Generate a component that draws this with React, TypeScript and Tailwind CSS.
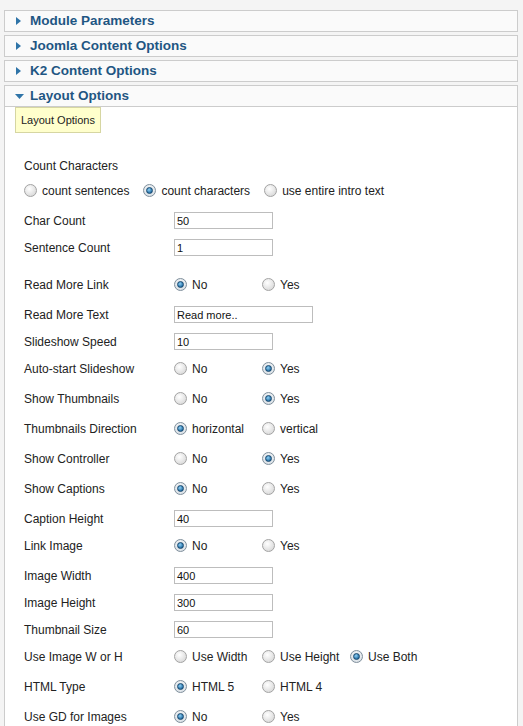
import React from "react";

type Row =
  | { label: string; kind: "input"; value: string; w: number }
  | { label: string; kind: "radio"; options: string[]; sel: number }
  | { kind: "spacer" };

const rows: Row[] = [
  { label: "Char Count", kind: "input", value: "50", w: 99 },
  { label: "Sentence Count", kind: "input", value: "1", w: 99 },
  { kind: "spacer" },
  { label: "Read More Link", kind: "radio", options: ["No", "Yes"], sel: 0 },
  { label: "Read More Text", kind: "input", value: "Read more..", w: 139 },
  { label: "Slideshow Speed", kind: "input", value: "10", w: 99 },
  { label: "Auto-start Slideshow", kind: "radio", options: ["No", "Yes"], sel: 1 },
  { label: "Show Thumbnails", kind: "radio", options: ["No", "Yes"], sel: 1 },
  { label: "Thumbnails Direction", kind: "radio", options: ["horizontal", "vertical"], sel: 0 },
  { label: "Show Controller", kind: "radio", options: ["No", "Yes"], sel: 1 },
  { label: "Show Captions", kind: "radio", options: ["No", "Yes"], sel: 0 },
  { label: "Caption Height", kind: "input", value: "40", w: 99 },
  { label: "Link Image", kind: "radio", options: ["No", "Yes"], sel: 0 },
  { label: "Image Width", kind: "input", value: "400", w: 99 },
  { label: "Image Height", kind: "input", value: "300", w: 99 },
  { label: "Thumbnail Size", kind: "input", value: "60", w: 99 },
  { label: "Use Image W or H", kind: "radio", options: ["Use Width", "Use Height", "Use Both"], sel: 2 },
  { label: "HTML Type", kind: "radio", options: ["HTML 5", "HTML 4"], sel: 0 },
  { label: "Use GD for Images", kind: "radio", options: ["No", "Yes"], sel: 0 },
];

function Radio({ checked }: { checked: boolean }) {
  if (checked) {
    return (
      <span className="flex h-[13px] w-[13px] shrink-0 items-center justify-center rounded-full border border-[#7f8f9c] bg-[radial-gradient(circle_at_50%_40%,#ffffff,#cdd6dd)]">
        <span className="h-[7px] w-[7px] rounded-full border border-[#16476e] bg-[radial-gradient(circle_at_40%_35%,#8fd0f5,#1f6aa0_75%)]" />
      </span>
    );
  }
  return (
    <span className="h-[13px] w-[13px] shrink-0 rounded-full border border-[#a3a3a3] bg-[radial-gradient(circle_at_40%_35%,#ffffff,#d0d0d0)]" />
  );
}

function Collapsed({ title }: { title: string }) {
  return (
    <div className="mb-[3px] flex h-[22px] items-center border border-[#cccccc] bg-[#fafafa]">
      <div className="w-[25px] pl-[11px]">
        <svg width="5" height="8" viewBox="0 0 5 8" className="block">
          <polygon points="0,0 5,4 0,8" fill="#2f74a8" />
        </svg>
      </div>
      <span className="text-[13.5px] font-bold text-[#1f5683]">{title}</span>
    </div>
  );
}

export default function App() {
  return (
    <div className="h-[726px] overflow-hidden bg-[#f4f4f4] pt-[10px] font-['Liberation_Sans',Arial,sans-serif] text-[#222222]">
      <div className="ml-[4px] w-[514px]">
        <Collapsed title="Module Parameters" />
        <Collapsed title="Joomla Content Options" />
        <Collapsed title="K2 Content Options" />
        <div className="flex h-[22px] items-center border border-[#cccccc] bg-[#fafafa]">
          <div className="w-[25px] pl-[10px]">
            <svg width="9" height="5" viewBox="0 0 9 5" className="block">
              <polygon points="0,0 9,0 4.5,5" fill="#2f74a8" />
            </svg>
          </div>
          <span className="text-[13.5px] font-bold text-[#1f5683]">Layout Options</span>
        </div>
        <div className="h-[700px] border-x border-[#cccccc] bg-white">
          <div className="ml-[10px] inline-flex h-[26px] items-center border border-[#d6d6a2] bg-[#ffffcc] px-[5px] text-[11px] text-[#222222]">
            Layout Options
          </div>
          <div className="pl-[19px] pt-[25px] text-[12px]">
            <div className="h-[24px] leading-[17px]">Count Characters</div>
            <div className="mb-[13px] flex h-[17px] items-center">
              {["count sentences", "count characters", "use entire intro text"].map((o, i) => (
                <div key={o} className="mr-[14px] flex items-center">
                  <Radio checked={i === 1} />
                  <span className="ml-[5px]">{o}</span>
                </div>
              ))}
            </div>
            {rows.map((r, idx) => {
              if (r.kind === "spacer") return <div key={idx} className="h-[10px]" />;
              return (
                <div
                  key={idx}
                  className={`flex h-[17px] items-center ${r.kind === "input" ? "mb-[10px]" : "mb-[13px]"}`}
                >
                  <div className="w-[150px] shrink-0">{r.label}</div>
                  {r.kind === "input" ? (
                    <div
                      className="flex h-[17px] items-center border border-[#bdbdbd] bg-white px-[2px] text-[11px] text-[#111111]"
                      style={{ width: r.w }}
                    >
                      {r.value}
                    </div>
                  ) : (
                    <div className="flex items-center">
                      {r.options.map((o, i) => (
                        <div key={o} className="mr-[10px] flex min-w-[78px] items-center">
                          <Radio checked={i === r.sel} />
                          <span className="ml-[5px]">{o}</span>
                        </div>
                      ))}
                    </div>
                  )}
                </div>
              );
            })}
          </div>
        </div>
      </div>
    </div>
  );
}
